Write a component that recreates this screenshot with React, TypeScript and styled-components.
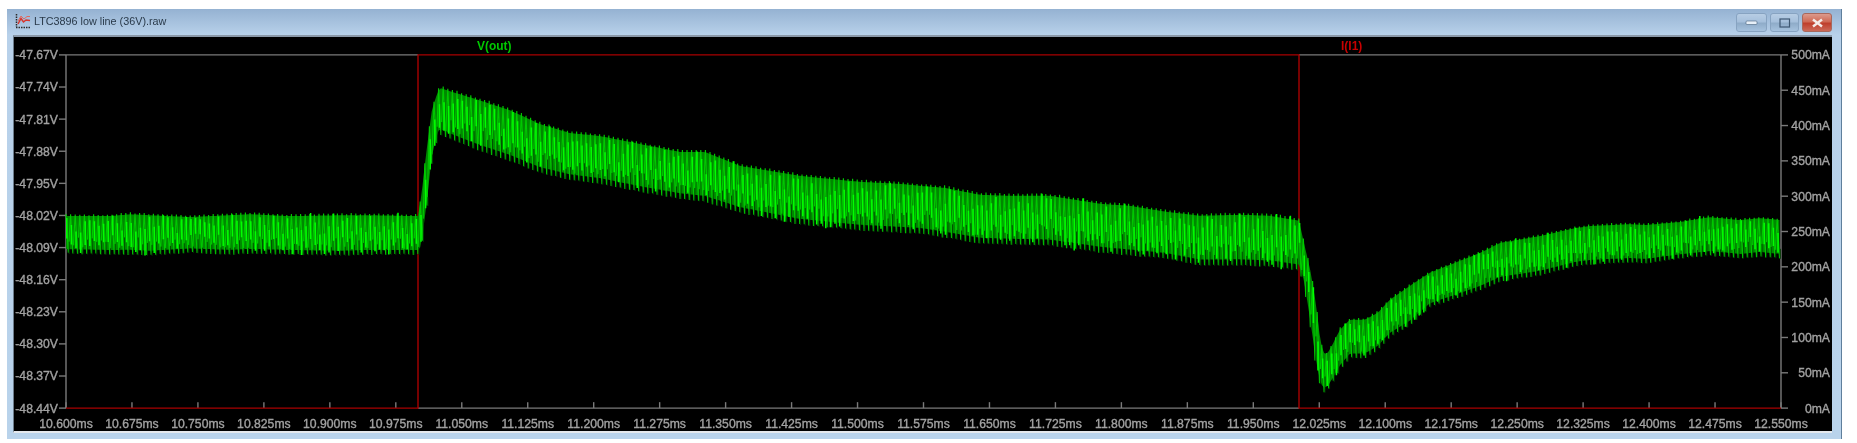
import React, { useMemo } from 'react';
import styled, { createGlobalStyle } from 'styled-components';

const Global = createGlobalStyle`
  html, body { margin: 0; background: #fff; }
  body { font-family: "Liberation Sans", Arial, sans-serif; }
`;

const Page = styled.div`
  padding: 9px 0 0 7px;
  height: 434px;
  box-sizing: content-box;
`;

const Window = styled.div`
  width: 1835px;
  height: 430px;
  box-sizing: border-box;
  display: flex;
  flex-direction: column;
  padding: 0 9px 6px 6px;
  background: linear-gradient(180deg, #95b2d2 0, #b8d1ea 26px, #b9d3eb 100%);
  border-right: 1px solid #5f7f9c;
`;

const TitleBar = styled.div`
  height: 26px;
  flex: none;
  display: flex;
  align-items: center;
  gap: 3px;
  padding: 0 0 2px 2px;
  box-sizing: border-box;
  filter: blur(0.5px);
`;

const Title = styled.span`
  flex: 1;
  font-family: "Liberation Sans", Arial, sans-serif;
  font-size: 10.8px;
  color: #2a3a4a;
`;

const Controls = styled.div`
  display: flex;
  align-items: flex-start;
  gap: 3px;
  align-self: flex-start;
  padding-top: 4px;
`;

const WinButton = styled.div<{ $w: number; $close?: boolean }>`
  width: ${p => p.$w}px;
  height: 19px;
  box-sizing: border-box;
  display: flex;
  align-items: center;
  justify-content: center;
  border: 1px solid ${p => (p.$close ? '#a8685c' : '#87a3c1')};
  border-radius: 3px;
  background: ${p =>
    p.$close
      ? 'linear-gradient(180deg, #dc9a8c 0, #cf6a55 45%, #bf3f2c 55%, #cc6a58 100%)'
      : 'linear-gradient(180deg, #b7cde4 0, #a6c0dc 45%, #8facc9 55%, #a6c2de 100%)'};
`;

const Plot = styled.div`
  flex: 1;
  background: #000;
  border-top: 2px solid #8a98a8;
  border-bottom: 2px solid #e4e8ec;
  border-left: 1px solid #6d7d8c;
  min-height: 0;
  line-height: 0;
`;

const Chart = styled.svg`
  display: block;
  width: 100%;
  height: 100%;
`;

const Soft = styled.g`
  filter: blur(0.6px);
`;

const Trace = styled.g`
  filter: blur(0.25px);
`;

const AxisLabel = styled.text`
  font-family: "Liberation Sans", Arial, sans-serif;
  font-size: 12.2px;
  fill: #a2a2a2;
  stroke: #a2a2a2;
  stroke-width: 0.35px;
`;

const TraceName = styled.text<{ $c: string }>`
  font-family: "Liberation Sans", Arial, sans-serif;
  font-size: 12px;
  font-weight: 700;
  fill: ${p => p.$c};
`;

const L = 66, R = 1781, T = 53, B = 408, S1 = 418, S2 = 1299;
const GRAY = '#7a7a7a', RED = '#a80000';

const envelope: [number, number, number][] = [
  [66, 213, 253], [110, 213, 254], [130, 211, 254], [150, 212, 255], [190, 214, 252], [230, 212, 254],
  [250, 211, 253], [290, 213, 254], [340, 212, 255], [370, 212, 254], [418, 213, 254],
  [421, 195, 252], [426, 150, 215], [432, 105, 160], [438, 87, 135], [441, 84, 134],
  [450, 87, 138], [480, 96, 150], [510, 106, 160], [540, 120, 172], [570, 129, 179], [600, 132, 183],
  [640, 140, 191], [680, 148, 198], [705, 148, 201], [740, 162, 212], [770, 167, 218], [800, 172, 224],
  [860, 178, 230], [900, 180, 232], [920, 182, 233], [945, 184, 237], [980, 191, 243], [1010, 192, 244], [1050, 192, 245],
  [1100, 200, 252], [1130, 202, 255], [1165, 208, 258], [1200, 212, 265], [1240, 211, 265], [1270, 212, 266], [1299, 217, 270],
  [1304, 240, 285], [1310, 265, 325], [1316, 300, 368], [1320, 335, 386], [1323, 350, 393], [1327, 352, 391], [1332, 343, 384],
  [1340, 327, 370], [1350, 317, 358], [1365, 317, 358], [1378, 310, 350], [1390, 297, 337], [1410, 283, 325],
  [1430, 270, 307], [1460, 258, 297], [1480, 250, 290], [1500, 240, 281], [1540, 233, 275], [1575, 225, 266], [1590, 223, 264],
  [1630, 221, 262], [1645, 222, 263], [1680, 219, 258], [1710, 214, 255], [1740, 217, 258], [1760, 215, 256], [1781, 217, 258],
];

const envAt = (x: number): [number, number] => {
  let i = 0;
  while (i < envelope.length - 2 && envelope[i + 1][0] < x) i++;
  const [x0, t0, b0] = envelope[i];
  const [x1, t1, b1] = envelope[i + 1];
  const f = Math.min(1, Math.max(0, (x - x0) / (x1 - x0)));
  return [t0 + (t1 - t0) * f, b0 + (b1 - b0) * f];
};

const rnd = (n: number) => {
  const j = Math.sin(n * 12.9898) * 43758.5453;
  return j - Math.floor(j);
};

const buildTraces = () => {
  const step = 2.3;
  let zig = '';
  let bright = '';
  let dark = '';
  let fillTop = '';
  let fillBot = '';
  let n = 0;
  for (let x = L; x <= R; x += step, n++) {
    const [t, b] = envAt(x);
    const h = b - t;
    const r = rnd(n);
    const y = n % 2 === 0 ? t + r * 1.2 : b - r * 1.2;
    zig += `${n === 0 ? 'M' : 'L'}${x.toFixed(2)} ${y.toFixed(1)} `;
    if (n % 2 === 0) {
      const mid = t + h * (0.28 + rnd(n + 7) * 0.44);
      const half = h * (0.18 + rnd(n + 3) * 0.14);
      bright += `M${(x + 0.8).toFixed(2)} ${(mid - half).toFixed(1)}V${(mid + half).toFixed(1)} `;
    } else {
      dark += `M${(x + 0.9).toFixed(2)} ${(b - h * (0.12 + rnd(n + 5) * 0.3)).toFixed(1)}V${b.toFixed(1)} `;
    }
    fillTop += `${x.toFixed(1)},${(t + h * 0.05).toFixed(1)} `;
    fillBot = `${x.toFixed(1)},${(b - h * 0.12).toFixed(1)} ` + fillBot;
  }
  return { zig, bright, dark, fill: fillTop + fillBot };
};

const yLeft = ['-47.67V', '-47.74V', '-47.81V', '-47.88V', '-47.95V', '-48.02V', '-48.09V', '-48.16V', '-48.23V', '-48.30V', '-48.37V', '-48.44V'];
const yRight = ['500mA', '450mA', '400mA', '350mA', '300mA', '250mA', '200mA', '150mA', '100mA', '50mA', '0mA'];
const xLabels = Array.from({ length: 27 }, (_, i) => `${(10.6 + i * 0.075).toFixed(3)}ms`);

const AppIcon = () => (
  <svg width="16" height="16" viewBox="0 0 16 16">
    <path d="M1.5 1v13" stroke="#2a2a2a" strokeWidth="1.5" strokeDasharray="1.5 1" fill="none" />
    <path d="M1 14.5h14" stroke="#2a2a2a" strokeWidth="1.6" strokeDasharray="1.5 1" fill="none" />
    <path d="M3 11 L6 5.5 L8.5 9 L11 7 L15 7.5" stroke="#d8362e" strokeWidth="1.5" fill="none" />
    <path d="M3 8 L6 3 L9 6 L12 3.5 L15 3.5" stroke="#e06a60" strokeWidth="1" fill="none" />
  </svg>
);

export default function App() {
  const tr = useMemo(buildTraces, []);
  const leftStep = (B - T) / 11;
  const rightStep = (B - T) / 10;
  const xStep = (R - L) / 26;
  return (
    <Page>
      <Global />
      <Window>
        <TitleBar>
          <AppIcon />
          <Title>LTC3896 low line (36V).raw</Title>
          <Controls>
            <WinButton $w={31}>
              <svg width="14" height="6" viewBox="0 0 14 6"><rect x="1" y="1" width="11" height="3.5" rx="1" fill="#e8f0f8" stroke="#47617e" strokeWidth="0.6" /></svg>
            </WinButton>
            <WinButton $w={29}>
              <svg width="12" height="10" viewBox="0 0 12 10"><rect x="1" y="1" width="9.5" height="8" fill="none" stroke="#3f5873" strokeWidth="1.2" /></svg>
            </WinButton>
            <WinButton $w={30} $close>
              <svg width="13" height="10" viewBox="0 0 13 10"><path d="M2 1.5 L11 8.5 M11 1.5 L2 8.5" stroke="#f4ece8" strokeWidth="2.4" /></svg>
            </WinButton>
          </Controls>
        </TitleBar>
        <Plot>
          <Chart viewBox="14 35 1818 396" preserveAspectRatio="none">
            <Soft>
              <g fill="none" strokeWidth="1.4">
                <path d={`M${L} ${T}H${S1}M${S2} ${T}H${R}M${L} ${T}V${B}M${R} ${T}V${B}M${S1} ${B}H${S2}`} stroke={GRAY} />
                {yLeft.map((_, i) => <path key={i} d={`M59 ${T + i * leftStep}H${L}`} stroke={GRAY} />)}
                {yRight.map((_, i) => <path key={i} d={`M${R} ${T + i * rightStep}H1788`} stroke={GRAY} />)}
                {xLabels.map((_, i) => <path key={i} d={`M${L + i * xStep} ${B}V402`} stroke={GRAY} />)}
                <path d={`M${L} ${B}H${S1}V${T}H${S2}V${B}H${R}`} stroke={RED} />
              </g>
              {yLeft.map((t, i) => (
                <AxisLabel key={t} x={58} y={T + i * leftStep + 4.5} textAnchor="end">{t}</AxisLabel>
              ))}
              {yRight.map((t, i) => (
                <AxisLabel key={t} x={1830} y={T + i * rightStep + 4.5} textAnchor="end">{t}</AxisLabel>
              ))}
              {xLabels.map((t, i) => (
                <AxisLabel key={t} x={L + i * xStep} y={428} textAnchor="middle">{t}</AxisLabel>
              ))}
              <TraceName $c="#00c800" x={477} y={48}>V(out)</TraceName>
              <TraceName $c="#c80000" x={1341} y={48}>I(I1)</TraceName>
            </Soft>
            <Trace>
              <polygon points={tr.fill} fill="#008800" />
              <path d={tr.zig} fill="none" stroke="#00c800" strokeWidth="1.1" />
              <path d={tr.dark} fill="none" stroke="#003c00" strokeWidth="0.9" />
              <path d={tr.bright} fill="none" stroke="#00ff00" strokeWidth="1.5" />
            </Trace>
          </Chart>
        </Plot>
      </Window>
    </Page>
  );
}
